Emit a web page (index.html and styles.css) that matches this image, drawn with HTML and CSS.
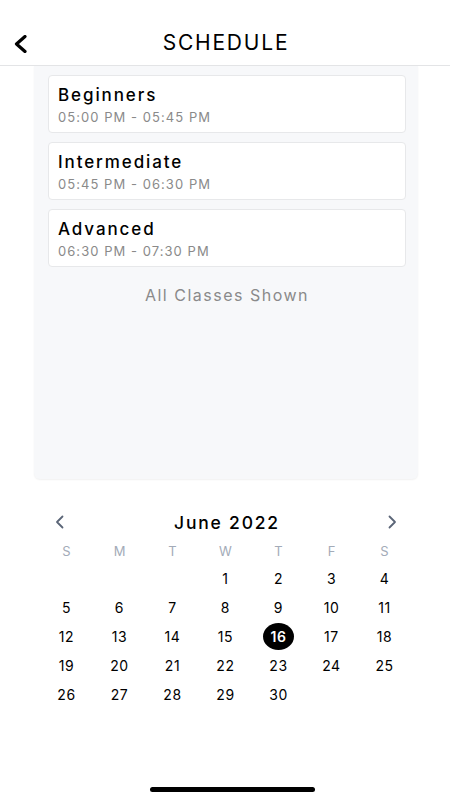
FILE: index.html
```html
<!DOCTYPE html>
<html lang="en">
  <head>
    <meta charset="utf-8" />
    <title>Schedule</title>
    <link rel="stylesheet" href="styles.css">
  </head>
  <body>
    <header class="topbar">
      <button class="back" aria-label="Back">
        <svg width="18" height="18" viewBox="0 0 18 18"><path d="M13 1.5 L4.5 9 L13 16.5" fill="none" stroke="#000" stroke-width="3.2" stroke-linecap="round" stroke-linejoin="round"/></svg>
      </button>
      <h1>SCHEDULE</h1>
    </header>

    <section class="panel">
      <div class="card">
        <div class="card-title">Beginners</div>
        <div class="card-time">05:00 PM - 05:45 PM</div>
      </div>
      <div class="card">
        <div class="card-title">Intermediate</div>
        <div class="card-time">05:45 PM - 06:30 PM</div>
      </div>
      <div class="card">
        <div class="card-title">Advanced</div>
        <div class="card-time">06:30 PM - 07:30 PM</div>
      </div>
      <p class="all-shown">All Classes Shown</p>
    </section>

    <section class="calendar">
      <div class="cal-head">
        <button class="nav" aria-label="Previous month">
          <svg width="12" height="14" viewBox="0 0 12 14"><path d="M8.5 1.5 L3 7 L8.5 12.5" fill="none" stroke="#5b6577" stroke-width="1.8" stroke-linecap="round" stroke-linejoin="round"/></svg>
        </button>
        <div class="month">June 2022</div>
        <button class="nav" aria-label="Next month">
          <svg width="12" height="14" viewBox="0 0 12 14"><path d="M3.5 1.5 L9 7 L3.5 12.5" fill="none" stroke="#5b6577" stroke-width="1.8" stroke-linecap="round" stroke-linejoin="round"/></svg>
        </button>
      </div>
      <div class="grid weekdays">
        <span>S</span><span>M</span><span>T</span><span>W</span><span>T</span><span>F</span><span>S</span>
      </div>
      <div class="grid days">
        <span></span><span></span><span></span><span>1</span><span>2</span><span>3</span><span>4</span>
        <span>5</span><span>6</span><span>7</span><span>8</span><span>9</span><span>10</span><span>11</span>
        <span>12</span><span>13</span><span>14</span><span>15</span><span class="selected">16</span><span>17</span><span>18</span>
        <span>19</span><span>20</span><span>21</span><span>22</span><span>23</span><span>24</span><span>25</span>
        <span>26</span><span>27</span><span>28</span><span>29</span><span>30</span><span></span><span></span>
      </div>
    </section>

    <div class="home-bar"></div>
  </body>
</html>
```

FILE: styles.css
```css
body {
  margin: 0;
  width: 450px;
  height: 800px;
  position: relative;
  background: #fff;
  font-family: Inter, "Noto Sans", sans-serif;
  color: #000;
  overflow: hidden;
}
button {
  background: none;
  border: 0;
  padding: 0;
  cursor: pointer;
}

.topbar {
  height: 66px;
  border-bottom: 1px solid #e3e4e6;
  display: flex;
  align-items: center;
  justify-content: center;
  position: relative;
  box-sizing: border-box;
  padding-top: 20px;
}
.topbar h1 {
  margin: 0 0 0 2px;
  font-size: 21px;
  font-weight: 400;
  letter-spacing: 1.8px;
}
.back {
  position: absolute;
  left: 12px;
  top: 35px;
  display: flex;
}

.panel {
  margin: 0 32px 0 34px;
  height: 413px;
  box-sizing: border-box;
  background: #f7f8fa;
  border-radius: 0 0 6px 6px;
  box-shadow: 0 1px 2px rgba(0, 0, 0, 0.06);
  padding: 9px 12px 0 14px;
  display: flex;
  flex-direction: column;
  gap: 9px;
}
.card {
  height: 58px;
  box-sizing: border-box;
  background: #fff;
  border: 1px solid #e7e8ea;
  border-radius: 4px;
  padding: 9px 9px 0;
}
.card-title {
  font-size: 17px;
  font-weight: 500;
  letter-spacing: 1.9px;
  line-height: 20px;
}
.card-time {
  margin-top: 3px;
  font-size: 13px;
  color: #8a8a8a;
  letter-spacing: 1.05px;
  line-height: 18px;
}
.all-shown {
  margin: 9px 0 0;
  text-align: center;
  font-size: 16px;
  color: #8a8a8a;
  letter-spacing: 1.5px;
}

.calendar {
  margin-top: 31px;
  padding: 0 39px 0 40px;
}
.cal-head {
  display: flex;
  align-items: center;
  justify-content: space-between;
  height: 24px;
  padding: 0 13px 0 14px;
}
.nav {
  display: flex;
}
.month {
  font-size: 17.5px;
  font-weight: 500;
  letter-spacing: 1.8px;
  margin-left: 2px;
}
.grid {
  display: grid;
  grid-template-columns: repeat(7, 53px);
  text-align: center;
}
.weekdays {
  margin-top: 7px;
  font-size: 13px;
  color: #a3abb8;
  line-height: 20px;
}
.days {
  margin-top: 3px;
  grid-auto-rows: 29px;
  font-size: 14px;
  letter-spacing: 0.6px;
  align-items: center;
  justify-items: center;
}
.days span {
  width: 31px;
  line-height: 27px;
}
.days .selected {
  background: #000;
  color: #fff;
  font-weight: 600;
  border-radius: 50%;
}

.home-bar {
  position: absolute;
  left: 150px;
  bottom: 8px;
  width: 165px;
  height: 5px;
  border-radius: 3px;
  background: #000;
}
```
